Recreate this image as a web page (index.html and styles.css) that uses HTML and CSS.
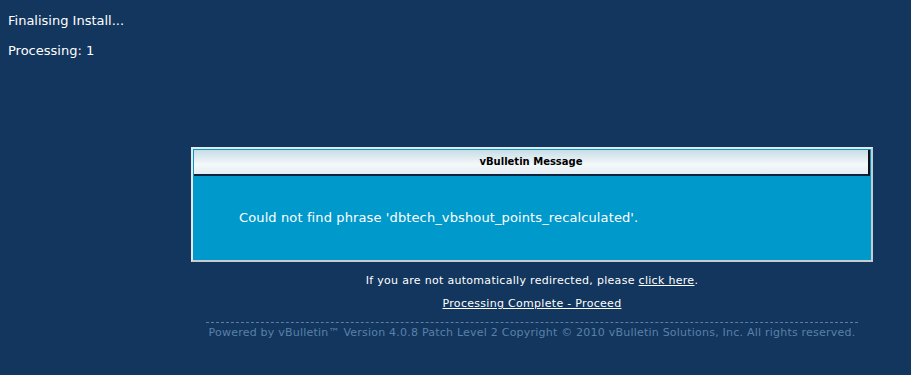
FILE: index.html
```html
<!DOCTYPE html>
<html>
<head>
<meta charset="utf-8">
<title>vBulletin Install</title>
<link rel="stylesheet" href="styles.css">
</head>
<body>
<p class="status">Finalising Install...</p>
<p class="status">Processing: 1</p>

<div class="wrap">
  <div class="msgbox">
    <div class="msghead">vBulletin Message</div>
    <div class="msgbody">Could not find phrase 'dbtech_vbshout_points_recalculated'.</div>
  </div>
  <p class="redirect">If you are not automatically redirected, please <a href="#">click here</a>.</p>
  <p class="proceed"><a href="#">Processing Complete - Proceed</a></p>
  <div class="copyright">Powered by vBulletin&trade; Version 4.0.8 Patch Level 2 Copyright &copy; 2010 vBulletin Solutions, Inc. All rights reserved.</div>
</div>
</body>
</html>
```
FILE: styles.css
```css
body {margin:0;padding:8px;background:#12365e;color:#fff;font:13px "DejaVu Sans",Verdana,sans-serif;}
p {margin:0;}
a {color:#fff;}
.status {line-height:16px;margin-top:5px;margin-bottom:14px;}

.wrap {width:682px;margin:88px 0 0 183px;}
.msgbox {border:2px solid #e6e9ec;border-right-color:#c8ccd0;border-bottom-color:#c8ccd0;padding:1px;background:#0099cc;}
.msghead {font:bold 10px "DejaVu Sans",Tahoma,sans-serif;height:24px;line-height:24px;text-align:center;color:#000;background:linear-gradient(#c7dde6,#f4f8fa 60%,#e4eef2);border-bottom:2px solid #0c2340;border-right:2px solid #111;}
.msgbody {height:83px;line-height:83px;padding-left:45px;font-size:13px;letter-spacing:0.12px;background:#0099cc;}

.redirect {text-align:center;font-size:11px;letter-spacing:0.3px;margin-top:12px;line-height:14px;}
.proceed {text-align:center;font-size:11px;letter-spacing:0.3px;margin-top:9px;line-height:14px;}
.copyright {margin:11px 15px 0 15px;border-top:1px dashed #5b7fa6;padding-top:3px;text-align:center;font-size:11px;letter-spacing:0.22px;color:#5a80a8;}
```
